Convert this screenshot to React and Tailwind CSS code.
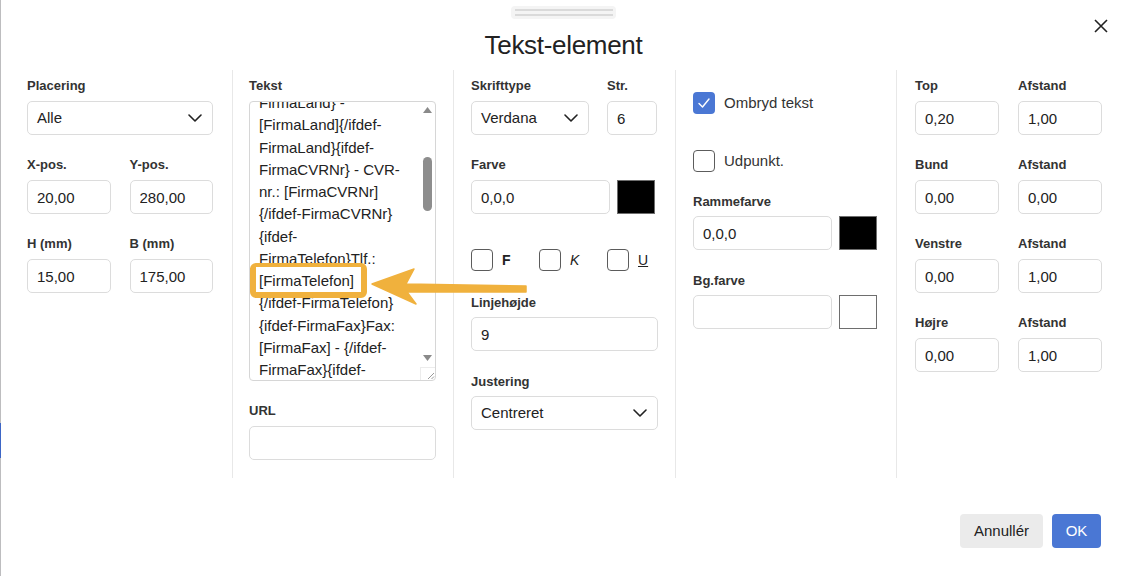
import React from 'react';

// Dialog for editing a text element on a report layout
const textLines = [
  'FirmaLand} -',
  '[FirmaLand]{/ifdef-',
  'FirmaLand}{ifdef-',
  'FirmaCVRNr} - CVR-',
  'nr.: [FirmaCVRNr]',
  '{/ifdef-FirmaCVRNr}',
  '{ifdef-',
  'FirmaTelefon}Tlf.:',
  '[FirmaTelefon]',
  '{/ifdef-FirmaTelefon}',
  '{ifdef-FirmaFax}Fax:',
  '[FirmaFax] - {/ifdef-',
  'FirmaFax}{ifdef-',
];

function Label({ children, className = 'mb-[7px]' }) {
  return <div className={`text-[13px] leading-4 font-bold text-[#333] ${className}`}>{children}</div>;
}

function Input({ value = '', className = 'w-full' }) {
  return (
    <input
      readOnly
      value={value}
      className={`h-[34px] border border-[#dcdcdc] rounded-[5px] pl-[9px] text-[15px] text-[#222] bg-white outline-none ${className}`}
    />
  );
}

function Chevron() {
  return (
    <svg width="14" height="8" viewBox="0 0 14 8" fill="none">
      <path d="M1 1l6 6 6-6" stroke="#222" strokeWidth="1.6" strokeLinecap="round" strokeLinejoin="round" />
    </svg>
  );
}

function Select({ value }) {
  return (
    <div className="h-[34px] border border-[#dcdcdc] rounded-[5px] pl-[9px] pr-[10px] flex items-center justify-between text-[15px] text-[#222]">
      <span>{value}</span>
      <Chevron />
    </div>
  );
}

function Swatch({ color }) {
  return <div className={`w-[38px] h-[34px] border border-[#6e6e6e] ${color}`} />;
}

function Checkbox({ checked }) {
  if (checked) {
    return (
      <div className="w-[22px] h-[22px] rounded-[4px] bg-[#4a77d4] flex items-center justify-center">
        <svg width="14" height="12" viewBox="0 0 14 12" fill="none">
          <path d="M2 6.5l3.5 3.5L12 2" stroke="white" strokeWidth="1.4" strokeLinecap="round" strokeLinejoin="round" />
        </svg>
      </div>
    );
  }
  return <div className="w-[22px] h-[22px] rounded-[4px] border border-[#5c5c5c] bg-white" />;
}

function PairRow({ items, className = '' }) {
  return (
    <div className={`grid grid-cols-2 gap-x-[19px] ${className}`}>
      {items.map(([label, value]) => (
        <div key={label + value}>
          <Label>{label}</Label>
          <Input value={value} />
        </div>
      ))}
    </div>
  );
}

function TextBox() {
  return (
    <div className="h-[280px] border border-[#d6d6d6] rounded-[4px] flex overflow-hidden">
      <div className="flex-1 overflow-hidden pl-[9px]">
        <div className="-mt-[10px] text-[15px] leading-[22.25px] text-[#222] whitespace-nowrap">
          {textLines.map((line, i) => (
            <div key={i}>{line}</div>
          ))}
        </div>
      </div>
      <div className="w-[15px] flex flex-col items-center pt-[5px]">
        <svg width="9" height="6" viewBox="0 0 9 6">
          <path d="M4.5 0L9 6H0z" fill="#8a8a8a" />
        </svg>
        <div className="mt-[44px] w-[9px] h-[54px] rounded-full bg-[#8d8d8d]" />
        <div className="flex-1" />
        <svg width="9" height="6" viewBox="0 0 9 6">
          <path d="M0 0h9L4.5 6z" fill="#8a8a8a" />
        </svg>
        <div className="mt-[6px] w-[15px] h-[13px] border-l border-t border-[#ececec] flex items-end justify-end">
          <svg width="10" height="10" viewBox="0 0 10 10">
            <path d="M9 3L3 9M9 6.5L6.5 9" stroke="#999" strokeWidth="1" />
          </svg>
        </div>
      </div>
    </div>
  );
}

export default function App() {
  return (
    <div className="w-[1126px] h-[576px] bg-white relative flex font-['Liberation_Sans',Arial,sans-serif] overflow-hidden">
      {/* edge of the page behind the dialog */}
      <div className="w-px bg-[#bdbdbf] flex flex-col">
        <div className="mt-[423px] h-[35px] bg-[#3d66c6]" />
      </div>

      <div className="flex-1 flex flex-col">
        {/* header */}
        <div className="h-[70px] flex flex-col items-center pt-[6px]">
          <div className="w-[105px] h-[13px] rounded-[4px] bg-[#f4f4f4] flex flex-col items-center justify-center gap-[3px]">
            <div className="w-[98px] h-[2px] bg-[#dadada]" />
            <div className="w-[98px] h-[2px] bg-[#dadada]" />
          </div>
          <div className="mt-[11px] text-[26px] leading-[30px] tracking-[-0.3px] text-[#222]">Tekst-element</div>
        </div>

        {/* columns */}
        <div className="h-[408px] flex">
          <div className="w-[232px] pl-[26px] pr-[19px] pt-[8px] border-r border-[#e8e8e8]">
            <Label>Placering</Label>
            <Select value="Alle" />
            <PairRow className="mt-[22px]" items={[['X-pos.', '20,00'], ['Y-pos.', '280,00']]} />
            <PairRow className="mt-[22px]" items={[['H (mm)', '15,00'], ['B (mm)', '175,00']]} />
          </div>

          <div className="w-[221px] pl-[16px] pr-[17px] pt-[8px] border-r border-[#e8e8e8]">
            <Label>Tekst</Label>
            <TextBox />
            <Label className="mt-[22px] mb-[7px]">URL</Label>
            <Input />
          </div>

          <div className="w-[222px] pl-[17px] pr-[17px] pt-[8px] border-r border-[#e8e8e8]">
            <div className="grid grid-cols-[118px_50px] gap-x-[18px]">
              <div>
                <Label>Skrifttype</Label>
                <Select value="Verdana" />
              </div>
              <div>
                <Label>Str.</Label>
                <Input value="6" />
              </div>
            </div>
            <Label className="mt-[22px] mb-[7px]">Farve</Label>
            <div className="flex gap-[7px]">
              <Input value="0,0,0" className="w-[139px]" />
              <Swatch color="bg-black" />
            </div>
            <div className="mt-[35px] grid grid-cols-[68px_68px_68px] text-[14px] text-[#222]">
              <div className="flex items-center gap-[9px]">
                <Checkbox />
                <span className="font-bold">F</span>
              </div>
              <div className="flex items-center gap-[9px]">
                <Checkbox />
                <span className="italic">K</span>
              </div>
              <div className="flex items-center gap-[9px]">
                <Checkbox />
                <span className="underline">U</span>
              </div>
            </div>
            <Label className="mt-[24px] mb-[6px]">Linjehøjde</Label>
            <Input value="9" />
            <Label className="mt-[23px] mb-[6px]">Justering</Label>
            <Select value="Centreret" />
          </div>

          <div className="w-[221px] pl-[17px] pr-[17px] pt-[22px] border-r border-[#e8e8e8]">
            <div className="flex items-center gap-[9px] text-[15px] text-[#333]">
              <Checkbox checked />
              <span>Ombryd tekst</span>
            </div>
            <div className="mt-[35px] flex items-center gap-[9px] text-[15px] text-[#333]">
              <Checkbox />
              <span>Udpunkt.</span>
            </div>
            <Label className="mt-[22px] mb-[6px]">Rammefarve</Label>
            <div className="flex gap-[7px]">
              <Input value="0,0,0" className="w-[139px]" />
              <Swatch color="bg-black" />
            </div>
            <Label className="mt-[23px] mb-[6px]">Bg.farve</Label>
            <div className="flex gap-[7px]">
              <Input className="w-[139px]" />
              <Swatch color="bg-white" />
            </div>
          </div>

          <div className="flex-1 pl-[18px] pr-[24px] pt-[8px]">
            <PairRow items={[['Top', '0,20'], ['Afstand', '1,00']]} />
            <PairRow className="mt-[22px]" items={[['Bund', '0,00'], ['Afstand', '0,00']]} />
            <PairRow className="mt-[22px]" items={[['Venstre', '0,00'], ['Afstand', '1,00']]} />
            <PairRow className="mt-[22px]" items={[['Højre', '0,00'], ['Afstand', '1,00']]} />
          </div>
        </div>

        {/* footer */}
        <div className="flex justify-end gap-[9px] pt-[36px] pr-[25px]">
          <button className="h-[34px] px-[14px] rounded-[4px] bg-[#ebebeb] text-[15px] text-[#222]">Annullér</button>
          <button className="h-[34px] w-[49px] rounded-[4px] bg-[#4a77d4] text-[15px] text-white">OK</button>
        </div>
      </div>

      {/* close */}
      <button className="absolute top-[19px] right-[18px] w-[14px] h-[14px]">
        <svg width="14" height="14" viewBox="0 0 14 14">
          <path d="M1 1l12 12M13 1L1 13" stroke="#222" strokeWidth="1.6" />
        </svg>
      </button>

      {/* annotation: highlighted field and arrow */}
      <div className="absolute left-[250px] top-[263px] w-[117px] h-[35px] rounded-[6px] border-[#f0b13d] border-t-[4px] border-l-[6px] border-r-[6px] border-b-[6px]" />
      <svg className="absolute left-[360px] top-[260px]" width="180" height="50" viewBox="0 0 180 50">
        <polygon
          points="12,24 54,9 46,24 166,26 166,32 47,32 56,44"
          fill="#f0b13d"
          stroke="#f0b13d"
          strokeWidth="1.5"
          strokeLinejoin="round"
        />
      </svg>
    </div>
  );
}
